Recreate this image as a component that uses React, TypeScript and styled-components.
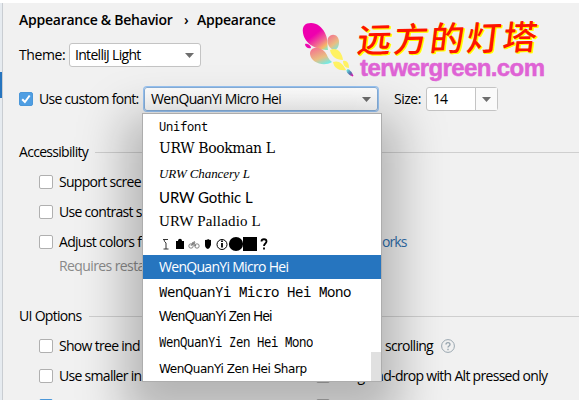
import React from 'react';
import styled, { createGlobalStyle } from 'styled-components';

const GlobalStyle = createGlobalStyle`
  * { box-sizing: border-box; }
  body { margin: 0; overflow: hidden; background: #f1f1f1; }
`;

const Window = styled.div`
  position: relative;
  display: flex;
  width: 579px;
  height: 400px;
  overflow: hidden;
  border-top: 3px solid #fff;
  background: #f1f1f1;
  color: #000;
  font: 14px/20px 'Open Sans', sans-serif;
  white-space: nowrap;
`;

const Sidebar = styled.div`
  flex: none;
  width: 3px;
  padding-top: 69px;
  background: #e6ebf0;
  border-right: 1px solid #c9cdd2;
`;

const SidebarSelection = styled.div`
  height: 26px;
  background: #2675bf;
`;

const Content = styled.main`
  flex: 1;
  min-width: 0;
  padding-left: 16px;
`;

const Row = styled.div<{ $h: number; $indent?: number; $top?: number }>`
  display: flex;
  align-items: center;
  height: ${p => p.$h}px;
  margin-top: ${p => p.$top ?? 0}px;
  padding-left: ${p => p.$indent ?? 0}px;
`;

const Text = styled.span<{ $ls?: number; $color?: string; $w?: number }>`
  flex: none;
  width: ${p => (p.$w ? `${p.$w}px` : 'auto')};
  letter-spacing: ${p => p.$ls ?? -0.7}px;
  color: ${p => p.$color ?? 'inherit'};
`;

const Gap = styled.span<{ $w: number }>`
  flex: none;
  width: ${p => p.$w}px;
`;

const Crumb = styled(Text)`
  font-weight: 600;
`;

const Select = styled.div<{ $w: number; $focus?: boolean }>`
  display: flex;
  flex: none;
  align-items: center;
  justify-content: space-between;
  width: ${p => p.$w}px;
  height: 24px;
  padding: 0 6px 0 ${p => (p.$focus ? 6 : 5)}px;
  border: 1px solid ${p => (p.$focus ? '#87afda' : '#c4c4c4')};
  border-radius: 3px;
  background: linear-gradient(#fff, ${p => (p.$focus ? '#fafafa' : '#fff')});
  box-shadow: ${p => (p.$focus ? '0 0 0 1px #97c3f3' : 'none')};
`;

const SizeField = styled.div`
  display: flex;
  width: 72px;
  height: 24px;
  margin-left: 6px;
  border: 1px solid #c4c4c4;
  border-radius: 3px;
  background: #fff;
`;

const SizeValue = styled.div`
  width: 49px;
  padding: 1px 0 0 6px;
  border-right: 1px solid #c4c4c4;
  letter-spacing: -0.9px;
`;

const SizeButton = styled.div`
  display: grid;
  flex: 1;
  place-items: center;
  background: #fafafa;
`;

const Box = styled.span<{ $checked?: boolean }>`
  display: grid;
  flex: none;
  width: 14px;
  height: 14px;
  margin-right: 6px;
  place-items: center;
  border: 1px solid ${p => (p.$checked ? '#4b97d9' : '#b0b0b0')};
  border-radius: 2px;
  background: ${p => (p.$checked ? '#4f9ee3' : '#fff')};
`;

const Rule = styled.span`
  flex: 1;
  height: 1px;
  margin-left: 6px;
  background: #cfcfcf;
`;

const Popup = styled.div`
  position: absolute;
  top: 110px;
  left: 142px;
  width: 240px;
  height: 269px;
  border: 1px solid #adadad;
  background: #fff;
  box-shadow: 0 20px 44px 18px rgba(0, 0, 0, 0.25);
`;

const Item = styled.div<{ $h: number; $font: string; $size: number; $ls: number; $sel?: boolean; $italic?: boolean; $dy?: number; $stretch?: number }>`
  height: ${p => p.$h}px;
  padding: ${p => p.$dy ?? 0}px 0 0 16px;
  background: ${p => (p.$sel ? '#2675bf' : 'transparent')};
  color: ${p => (p.$sel ? '#fff' : '#000')};
  font: ${p => (p.$italic ? 'italic' : 'normal')} 400 ${p => p.$size}px/${p => p.$h}px ${p => p.$font};
  letter-spacing: ${p => p.$ls}px;

  span {
    display: inline-block;
    line-height: 20px;
    transform: scaleX(${p => p.$stretch ?? 1});
    transform-origin: left;
  }
`;

const Glyphs = styled.div`
  height: 22px;
  padding-left: 16px;
`;

const ScrollThumb = styled.div`
  position: absolute;
  right: 0;
  bottom: 0;
  width: 10px;
  height: 29px;
  background: #e0e0e0;
`;

const Logo = styled.div`
  position: absolute;
  top: 15px;
  left: 302px;
  display: flex;
`;

const LogoWords = styled.div`
  margin-left: 4px;
`;

const LogoTitle = styled.div`
  height: 38px;
  color: #fe1300;
  font: 500 34px/38px 'Noto Sans CJK SC', sans-serif;
  letter-spacing: 2.3px;
  text-shadow: 1px 1px #ff0, 2px 1px #ff0;
  transform: skewX(-8deg) rotate(-1deg);
`;

const LogoDomain = styled.div`
  height: 24px;
  padding-left: 2px;
  color: #df63d5;
  font: 700 24px/24px 'Liberation Sans', sans-serif;
  letter-spacing: -0.6px;
  -webkit-text-stroke: 0.5px #df63d5;
`;

const Arrow = () => (
  <svg width="9" height="5" viewBox="0 0 9 5"><path d="M0 0h9L4.5 5z" fill="#6e6e6e" /></svg>
);

const Check = () => (
  <svg width="12" height="12" viewBox="0 0 12 12"><path d="M2.2 6.2 4.9 9l4.8-6.5" fill="none" stroke="#fff" strokeWidth="2" /></svg>
);

const Help = () => (
  <svg width="14" height="14" viewBox="0 0 14 14" fill="none" stroke="#9aa7b0">
    <circle cx="7" cy="7" r="6.4" />
    <path d="M5 5.5c0-2.5 4-2.5 4 0 0 1.4-2 1.5-2 3" strokeWidth="1.4" />
    <path d="M7 9.8v1.4" strokeWidth="1.4" />
  </svg>
);

const Butterfly = () => (
  <svg width="52" height="62" viewBox="0 0 52 62">
    <defs>
      <linearGradient id="wing" x1="0.25" y1="0.1" x2="0.9" y2="1">
        <stop offset="0.35" stopColor="#ee00ae" /><stop offset="0.68" stopColor="#f06d90" />
        <stop offset="0.88" stopColor="#f7b866" /><stop offset="1" stopColor="#8ce8c0" />
      </linearGradient>
      <linearGradient id="small" x1="0.2" y1="0" x2="0.75" y2="1">
        <stop stopColor="#f5738f" /><stop offset="0.6" stopColor="#e9bf82" /><stop offset="1" stopColor="#6decea" />
      </linearGradient>
      <linearGradient id="tip" x1="0" y1="0" x2="1" y2="1">
        <stop stopColor="#66e6df" /><stop offset="0.55" stopColor="#5372ae" /><stop offset="1" stopColor="#f000ae" />
      </linearGradient>
    </defs>
    <path d="M1 15C0 8 3 5 9 5c6 0 11 4 14 10 3 6 2 9 3 17C16 32 3 27 1 15z" fill="url(#wing)" />
    <path d="M26 20c4-6 11-3 11 4 0 5-2 7-5 9-4-3-8-7-6-13z" fill="url(#small)" />
    <path d="M3 26c3-1 6 2 6 4-3 1-6-1-6-4z" fill="#ed08b0" />
    <path d="M8 36c0-8 10-8 15-2 3 4 3 7 7 10-8 5-21 1-22-8z" fill="url(#small)" />
    <path d="M28 32c7-3 12 2 13 10-7 0-12-4-13-10zM31 44c5-2 10 1 13 8-7 1-12-2-13-8zM41 43c4-1 6 2 6 7-4 0-6-3-6-7z" fill="#fff262" />
    <path d="M45 52c2-1 4 1 6 6-4-1-6-3-6-6z" fill="url(#tip)" stroke="url(#tip)" />
  </svg>
);

const Pictograms = () => (
  <svg width="116" height="22" viewBox="0 0 116 22">
    <path d="M4 6.500h5M5 6.500q0 2 2 3.500v6M4.500 16h5" fill="none" stroke="#333" />
    <path d="M17 8h2c0-3 4-3 4 0h2v8h-8z" />
    <g fill="none" stroke="#777" strokeWidth="0.9"><circle cx="32" cy="13" r="2.2" /><circle cx="38" cy="13" r="2.2" /><path d="m32 13 2-4 3 4-4-2 3-1-1-2" /></g>
    <path d="M46 7q3 0 3-1 1 1 3 1v5q-1 3-3 4-3-1-3-4z" />
    <circle cx="63" cy="11.5" r="5" fill="none" stroke="#000" /><path d="M63 7.5v1.500M63 10v4.500" fill="none" stroke="#000" strokeWidth="1.8" />
    <circle cx="77" cy="11" r="7.1" /><path d="M84 4h14v14H84z" />
    <path d="M102.5 8.500c0-3 5-3 5 0 0 2-2.500 2-2.500 4.500M105 14.500v2" fill="none" stroke="#000" strokeWidth="1.8" />
  </svg>
);

const mono = "'Noto Sans Mono', 'DejaVu Sans Mono', monospace";

export default function App() {
  return (
    <>
      <GlobalStyle />
      <Window>
        <Sidebar><SidebarSelection /></Sidebar>
        <Content>
          <Row $h={34}>
            <Crumb $w={165} $ls={-0.25}>Appearance &amp; Behavior</Crumb>
            <Crumb $w={13}>›</Crumb>
            <Crumb $ls={-0.25}>Appearance</Crumb>
          </Row>
          <Row $h={24} $top={6}>
            <Text $w={50} $ls={-0.4}>Theme:</Text>
            <Select $w={132}><Text>IntelliJ Light</Text><Arrow /></Select>
          </Row>
          <Row $h={24} $top={20}>
            <Box $checked><Check /></Box>
            <Text $w={105}>Use custom font:</Text>
            <Select $w={234} $focus><Text $ls={-0.65}>WenQuanYi Micro Hei</Text><Arrow /></Select>
            <Row $h={24} $indent={16}><Text $w={26} $ls={-0.5}>Size:</Text><SizeField><SizeValue>14</SizeValue><SizeButton><Arrow /></SizeButton></SizeField></Row>
          </Row>
          <Row $h={20} $top={31}><Text $w={70}>Accessibility</Text><Rule /></Row>
          <Row $h={30} $top={5} $indent={20}><Box /><Text $w={83}>Support scree</Text></Row>
          <Row $h={30} $indent={20}><Box /><Text $w={83}>Use contrast s</Text></Row>
          <Row $h={30} $indent={20}><Box /><Text $w={83}>Adjust colors f</Text><Gap $w={240} /><Text $color="#2f6fad" $ls={-0.9}>orks</Text></Row>
          <Row $h={18} $indent={40}><Text $w={83} $color="#8a8a8a" $ls={-0.6}>Requires resta</Text></Row>
          <Row $h={20} $top={31}><Text $w={64}>UI Options</Text><Rule /></Row>
          <Row $h={30} $top={5} $indent={20}>
            <Box /><Text $w={83}>Show tree ind</Text>
            <Gap $w={243} /><Text $w={56}>scrolling</Text><Help />
          </Row>
          <Row $h={30} $indent={20}><Box /><Text $w={83}>Use smaller in</Text><Gap $w={174} /><Box /><Text>Drag-and-drop with Alt pressed only</Text></Row>
          <Row $h={30} $indent={20}><Box $checked><Check /></Box><Gap $w={257} /><Box /></Row>
        </Content>
        <Logo>
          <Butterfly />
          <LogoWords><LogoTitle>远方的灯塔</LogoTitle><LogoDomain>terwergreen.com</LogoDomain></LogoWords>
        </Logo>
        <Popup>
          <Item $h={22} $dy={2} $font={mono} $size={12} $ls={-0.2}><span>Unifont</span></Item>
          <Item $h={25} $font="'DejaVu Serif', serif" $size={14} $ls={-0.4}><span>URW Bookman L</span></Item>
          <Item $h={24} $dy={1} $font="'Liberation Serif', serif" $size={13} $ls={-0.1} $italic><span>URW Chancery L</span></Item>
          <Item $h={24} $font="Lato, sans-serif" $size={15} $ls={-0.1}><span>URW Gothic L</span></Item>
          <Item $h={24} $font="'Liberation Serif', serif" $size={15} $ls={0.15}><span>URW Palladio L</span></Item>
          <Glyphs><Pictograms /></Glyphs>
          <Item $h={24} $font="'Open Sans', sans-serif" $size={14} $ls={-0.7} $sel><span>WenQuanYi Micro Hei</span></Item>
          <Item $h={25} $font={mono} $size={14} $ls={-0.4}><span>WenQuanYi Micro Hei Mono</span></Item>
          <Item $h={25} $font="'Liberation Sans', sans-serif" $size={14} $ls={-0.6} $stretch={0.96}><span>WenQuanYi Zen Hei</span></Item>
          <Item $h={25} $font={mono} $size={14} $ls={-0.4} $stretch={0.875}><span>WenQuanYi Zen Hei Mono</span></Item>
          <Item $h={28} $dy={1} $font="'DejaVu Sans', sans-serif" $size={12} $ls={-0.45}><span>WenQuanYi Zen Hei Sharp</span></Item>
          <ScrollThumb />
        </Popup>
      </Window>
    </>
  );
}
